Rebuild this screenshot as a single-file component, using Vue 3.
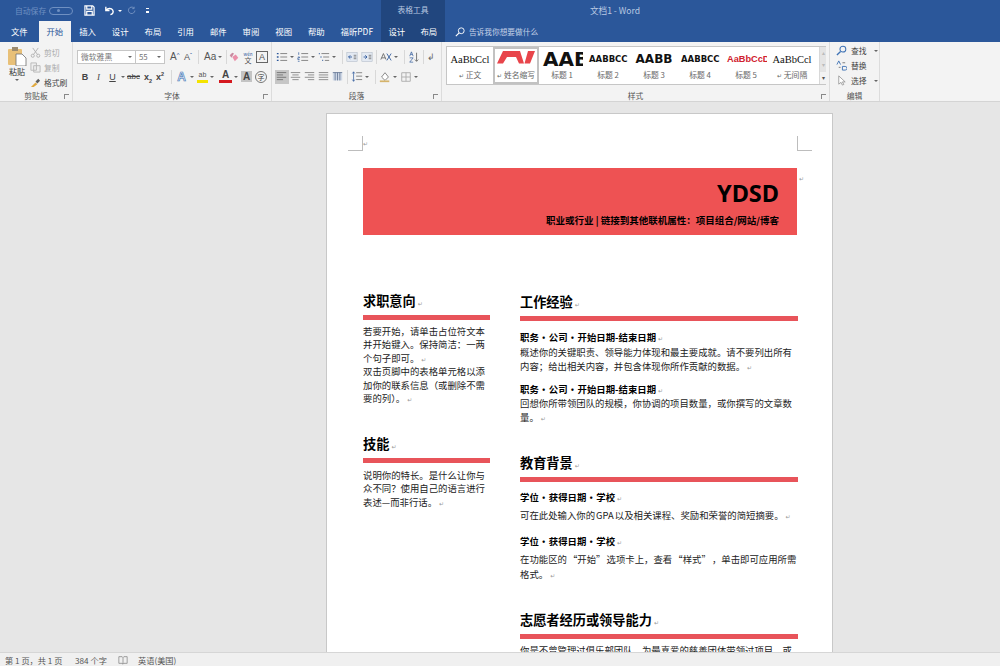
<script setup>
// 顶部选项卡
const tabs = ['插入', '设计', '布局', '引用', '邮件', '审阅', '视图', '帮助']

const styles = [
  { key: 'normal', sample: 'AaBbCcl', name: '正文', mark: true, cls: 'plain' },
  { key: 'initials', sample: '', name: '姓名缩写', mark: true, cls: 'logo' },
  { key: 'h1', sample: 'AAB', name: '标题 1', cls: 'h1' },
  { key: 'h2', sample: 'AABBCC', name: '标题 2', cls: 'h2' },
  { key: 'h3', sample: 'AABB', name: '标题 3', cls: 'h3' },
  { key: 'h4', sample: 'AABBCC', name: '标题 4', cls: 'h2' },
  { key: 'h5', sample: 'AaBbCcD', name: '标题 5', cls: 'h5' },
  { key: 'nospace', sample: 'AaBbCcl', name: '无间隔', mark: true, cls: 'plain' }
]

const jobs = [
  { title: '职务 • 公司 • 开始日期-结束日期', text: '概述你的关键职责、领导能力体现和最主要成就。请不要列出所有内容；给出相关内容，并包含体现你所作贡献的数据。' },
  { title: '职务 • 公司 • 开始日期-结束日期', text: '回想你所带领团队的规模，你协调的项目数量，或你撰写的文章数量。' }
]

const schools = [
  { title: '学位 • 获得日期 • 学校', text: '可在此处输入你的 GPA 以及相关课程、奖励和荣誉的简短摘要。' },
  { title: '学位 • 获得日期 • 学校', text: '在功能区的 “开始” 选项卡上，查看 “样式” ，单击即可应用所需格式。' }
]
</script>

<template>
  <div class="word">
    <header class="title-row">
      <div class="qat">
        <span class="autosave">自动保存</span>
        <span class="toggle"><i></i></span>
        <svg class="qat-icon save" viewBox="0 0 12 12"><path d="M1 1h8.500L11 2.500V11H1z M3 1v3.500h5.500V1 M3 11V7h6v4" fill="none" stroke="#fff" stroke-width="1.300"/></svg>
        <svg class="qat-icon undo" viewBox="0 0 12 12"><path d="M2 2v4h4 M2.500 5.500C4 3.500 8 3 9.500 5.500S9 10 7 10.500" fill="none" stroke="#fff" stroke-width="1.500"/></svg>
        <span class="caret-w"></span>
        <svg class="qat-icon redo" viewBox="0 0 12 12"><path d="M9 2.500A4.300 4.300 0 1 0 10.500 6 M9.500 1v2.500H7" fill="none" stroke="#7f9cc7" stroke-width="1.100"/></svg>
        <span class="qat-more"></span>
      </div>
      <div class="context-title">表格工具</div>
      <div class="doc-title">文档1  -  Word</div>
    </header>

    <nav class="tab-row">
      <span class="tab first">文件</span>
      <span class="tab active">开始</span>
      <span v-for="(t, i) in tabs" :key="i" class="tab">{{ t }}</span>
      <span class="tab pdf">福昕PDF</span>
      <div class="context-tabs">
        <span class="tab">设计</span>
        <span class="tab">布局</span>
      </div>
      <div class="tell-me">
        <svg viewBox="0 0 12 12"><circle cx="7.500" cy="4.500" r="3.500" fill="none" stroke="#fff" stroke-width="1.100"/><path d="M5 7L1 11" stroke="#fff" stroke-width="1.400"/></svg>
        <span>告诉我你想要做什么</span>
      </div>
    </nav>

    <section class="ribbon">
      <div class="group clip">
        <div class="group-body clip-body">
          <div class="paste">
            <svg viewBox="0 0 20 19"><rect x="1" y="2" width="14" height="16" rx="1" fill="#e8c078"/><rect x="5" y="0" width="6" height="4" fill="#9b8a6e"/><path d="M9 7h6l4 4v8H9z" fill="#fff" stroke="#6f6f6f" stroke-width=".8"/></svg>
            <span>粘贴</span>
            <i class="caret"></i>
          </div>
          <div class="clip-col">
            <div class="clip-item off">
              <svg viewBox="0 0 12 12"><path d="M3 1l5 7M9 1L4 8" stroke="#b0b0b0" fill="none"/><circle cx="3" cy="9.500" r="1.700" fill="none" stroke="#b0b0b0"/><circle cx="9" cy="9.500" r="1.700" fill="none" stroke="#b0b0b0"/></svg>
              剪切
            </div>
            <div class="clip-item off">
              <svg viewBox="0 0 12 12"><path d="M1 1h6v8H1z M4 4h7v7H4z" fill="#eee" stroke="#b8b8b8"/></svg>
              复制
            </div>
            <div class="clip-item">
              <svg viewBox="0 0 12 12"><path d="M1 11l5-5 2 2-4 3z" fill="#e0a93f"/><path d="M6 5l3-3 2 2-3 3z" fill="#5e5e5e"/></svg>
              格式刷
            </div>
          </div>
        </div>
        <div class="group-label">剪贴板</div>
        <i class="launcher"></i>
      </div>

      <div class="group font">
        <div class="group-body stack">
          <div class="row">
            <div class="select family">微软雅黑<i class="caret"></i></div>
            <div class="select size">55<i class="caret"></i></div>
            <span class="glyph big">A<sup>^</sup></span>
            <span class="glyph big small-a">A<sup>ˇ</sup></span>
            <b class="divider tight-left"></b>
            <span class="glyph aa">Aa<i class="caret"></i></span>
            <b class="divider tight-right"></b>
            <svg class="icon" viewBox="0 0 14 14"><path d="M2 5l3-3 2 1-3 5z" fill="#c98aa0"/><path d="M5 7l4-3 3 4-4 4z" fill="#ea8fa9"/></svg>
            <span class="wen"><small>wén</small>文</span>
            <span class="boxed">A</span>
          </div>
          <div class="row second">
            <span class="fmt bold">B</span>
            <span class="fmt ital">I</span>
            <span class="fmt under">U</span><i class="caret tight flush"></i>
            <span class="fmt strike">abc</span>
            <span class="fmt script">x<sub>2</sub></span>
            <span class="fmt script">x<sup>2</sup></span>
            <b class="divider wide-left"></b>
            <span class="effect">A</span><i class="caret tight"></i>
            <span class="hilite">ab<i></i></span><i class="caret tight"></i>
            <span class="fcolor">A<i></i></span><i class="caret tight"></i>
            <span class="shade">A</span>
            <span class="circle">字</span>
          </div>
        </div>
        <div class="group-label">字体</div>
        <i class="launcher"></i>
      </div>

      <div class="group para">
        <div class="group-body stack">
          <div class="row">
            <svg class="icon" viewBox="0 0 14 14"><path d="M5 3h8M5 7h8M5 11h8" stroke="#777"/><path d="M1 3h2M1 7h2M1 11h2" stroke="#2b579a" stroke-width="1.500"/></svg><i class="caret tight"></i>
            <svg class="icon" viewBox="0 0 14 14"><path d="M5 3h8M5 7h8M5 11h8" stroke="#777"/><path d="M2 1.500v3M1 7h2v1H1v2h2M1 12h2" stroke="#2b579a" fill="none" stroke-width=".8"/></svg><i class="caret tight"></i>
            <svg class="icon" viewBox="0 0 14 14"><path d="M4 3h9M6 7h7M8 11h5" stroke="#777"/><path d="M1 3h1M3 7h1M5 11h1" stroke="#2b579a" stroke-width="1.500"/></svg><i class="caret tight"></i>
            <b class="divider"></b>
            <svg class="icon" viewBox="0 0 14 14"><rect x="1" y="2" width="12" height="10" fill="#e3e9f2" stroke="#a9b4c4" stroke-width=".6"/><path d="M7 7H3M5 5L3 7l2 2" stroke="#2b579a" fill="none"/><path d="M9 5h3M9 7h3M9 9h3" stroke="#777"/></svg>
            <svg class="icon indent-next" viewBox="0 0 14 14"><rect x="1" y="2" width="12" height="10" fill="#e3e9f2" stroke="#a9b4c4" stroke-width=".6"/><path d="M3 7h4M5 5l2 2-2 2" stroke="#2b579a" fill="none"/><path d="M9 5h3M9 7h3M9 9h3" stroke="#777"/></svg>
            <b class="divider"></b>
            <svg class="icon" viewBox="0 0 14 14"><path d="M1 10l3-7 3 7M2 8h4" fill="none" stroke="#666"/><path d="M8 3l5 8M13 3l-5 8" stroke="#2b579a"/></svg><i class="caret tight"></i>
            <b class="divider"></b>
            <svg class="icon" viewBox="0 0 14 14"><path d="M2 6l2-5 2 5M3 4h2M2 8h4l-4 5h4" fill="none" stroke="#2b579a" stroke-width=".8"/><path d="M10 2v10M8 10l2 2 2-2" fill="none" stroke="#666"/></svg>
            <b class="divider"></b>
            <span class="pilcrow">↲</span>
          </div>
          <div class="row second para-second">
            <span class="align on"><svg viewBox="0 0 14 14"><path d="M1 2h12M1 5h8M1 8h12M1 11h8" stroke="#666"/></svg></span>
            <span class="align"><svg viewBox="0 0 14 14"><path d="M1 2h12M3 5h8M1 8h12M3 11h8" stroke="#777"/></svg></span>
            <span class="align"><svg viewBox="0 0 14 14"><path d="M1 2h12M5 5h8M1 8h12M5 11h8" stroke="#777"/></svg></span>
            <span class="align"><svg viewBox="0 0 14 14"><path d="M1 2h12M1 5h12M1 8h12M1 11h12" stroke="#777"/></svg></span>
            <span class="align"><svg viewBox="0 0 14 14"><rect x="1" y="2" width="12" height="10" fill="#cfd8e6"/><path d="M1 2h12M4 2v10M7 2v10M10 2v10" stroke="#5c6f8f"/></svg></span>
            <b class="divider"></b>
            <svg class="icon" viewBox="0 0 14 14"><path d="M6 2h7M6 6h7M6 10h7" stroke="#777"/><path d="M3 1v11M1.500 3L3 1l1.500 2M1.500 10L3 12l1.500-2" stroke="#2b579a" fill="none" stroke-width=".8"/></svg><i class="caret tight"></i>
            <b class="divider"></b>
            <svg class="icon" viewBox="0 0 14 14"><path d="M3 7l4-5 4 5-4 4z" fill="#fff" stroke="#777"/><path d="M1 12h11" stroke="#d5b36a" stroke-width="2"/></svg><i class="caret tight"></i>
            <svg class="icon" viewBox="0 0 14 14"><path d="M2 2h10v10H2zM7 2v10M2 7h10" fill="none" stroke="#a9a9a9"/></svg><i class="caret tight"></i>
          </div>
        </div>
        <div class="group-label">段落</div>
        <i class="launcher"></i>
      </div>

      <div class="group gallery-group">
        <div class="group-body">
          <div class="gallery">
            <div v-for="s in styles" :key="s.key" class="style-item" :class="{ selected: s.key === 'initials' }">
              <div class="sample" :class="s.cls">
                <svg v-if="s.key === 'initials'" viewBox="0 0 38 12.500"><path d="M6 0h17l4 12.500h-5L19 6h-9l-4 6.500H0zM31 0h7l-5 12.500h-5.500z" fill="#e8454b"/></svg>
                <template v-else>{{ s.sample }}</template>
              </div>
              <div class="style-name"><span v-if="s.mark" class="mark">↵</span>{{ s.name }}</div>
            </div>
            <div class="gallery-scroll">
              <span class="dim">▴</span>
              <span class="dim">▾</span>
              <span>▾</span>
            </div>
          </div>
        </div>
        <div class="group-label">样式</div>
        <i class="launcher"></i>
      </div>

      <div class="group edit">
        <div class="group-body edit-body">
          <div class="edit-item">
            <svg viewBox="0 0 12 12"><circle cx="7.500" cy="4.500" r="3.200" fill="none" stroke="#3f73b5" stroke-width="1.100"/><path d="M5 7L1 11" stroke="#3f73b5" stroke-width="1.500"/></svg>
            查找<i class="caret"></i>
          </div>
          <div class="edit-item">
            <svg viewBox="0 0 12 12"><path d="M1 5l2-4 2 4M7 7v4h3a1 1 0 0 0 0-4z" fill="none" stroke="#3f73b5"/><path d="M7 3h3M3 8h2" stroke="#777"/></svg>
            替换
          </div>
          <div class="edit-item">
            <svg viewBox="0 0 12 12"><path d="M3 1v9l2.500-2 1.500 3 1.500-.7L7 7.500h3z" fill="#fff" stroke="#888" stroke-width=".8"/></svg>
            选择<i class="caret"></i>
          </div>
        </div>
        <div class="group-label">编辑</div>
      </div>
    </section>

    <main class="workspace">
      <article class="page">
        <i class="crop crop-left"></i>
        <i class="crop crop-right"></i>
        <span class="ret top-ret">↵</span>
        <div class="banner">
          <h1>YDSD</h1>
          <p>职业或行业 | 链接到其他联机属性：项目组合/网站/博客</p>
          <span class="ret banner-ret">↵</span>
        </div>

        <div class="columns">
          <div class="col-left">
            <h2>求职意向<span class="ret">↵</span></h2>
            <div class="rule"></div>
            <p class="body">若要开始，请单击占位符文本并开始键入。保持简洁：一两个句子即可。<span class="ret">↵</span><br>双击页脚中的表格单元格以添加你的联系信息（或删除不需要的列）。<span class="ret">↵</span></p>

            <h2 class="next">技能<span class="ret">↵</span></h2>
            <div class="rule"></div>
            <p class="body">说明你的特长。是什么让你与众不同？使用自己的语言进行表述—而非行话。<span class="ret">↵</span></p>
          </div>

          <div class="col-right">
            <h2>工作经验<span class="ret">↵</span></h2>
            <div class="rule"></div>
            <div v-for="(j, i) in jobs" :key="i" class="job">
              <h3>{{ j.title }}<span class="ret">↵</span></h3>
              <p class="body wide">{{ j.text }}<span class="ret">↵</span></p>
            </div>

            <h2 class="next">教育背景<span class="ret">↵</span></h2>
            <div class="rule"></div>
            <div v-for="(s, i) in schools" :key="i" class="school">
              <h3>{{ s.title }}<span class="ret">↵</span></h3>
              <p class="body loose">{{ s.text }}<span class="ret">↵</span></p>
            </div>

            <h2 class="next after-school">志愿者经历或领导能力<span class="ret">↵</span></h2>
            <div class="rule"></div>
            <p class="body loose last">你是不曾管理过俱乐部团队、为最喜爱的慈善团体带领过项目，或组织过活动？</p>
          </div>
        </div>
      </article>
    </main>

    <footer class="status">
      <span class="s1">第 1 页，共 1 页</span>
      <span class="s2">384 个字</span>
      <svg viewBox="0 0 12 12"><path d="M1 2h4l1 1 1-1h4v8H7l-1 1-1-1H1z M6 3v8" fill="none" stroke="#777" stroke-width=".8"/></svg>
      <span class="s3">英语(美国)</span>
    </footer>
  </div>
</template>

<style>
html, body {
  margin: 0;
  padding: 0;
  overflow: hidden;
}
</style>

<style scoped>
.word {
  width: 1000px;
  height: 666px;
  display: flex;
  flex-direction: column;
  overflow: hidden;
  font-family: "Noto Sans CJK SC", "Noto Sans", sans-serif;
  background: #e6e6e6;
  color: #444;
}

i, b.divider {
  display: block;
}

/* 标题栏 */
.title-row {
  height: 21px;
  flex-shrink: 0;
  display: flex;
  background: #2b579a;
  color: #dfe7f3;
  font-size: 7.800px;
  line-height: 20px;
}

.qat {
  width: 381px;
  display: flex;
  align-items: center;
  flex-shrink: 0;
}

.autosave {
  margin-left: 15px;
  width: 34px;
  font-size: 7.800px;
  color: #6f90c2;
}

.toggle {
  width: 24px;
  height: 8px;
  border: 1px solid #6f90c2;
  border-radius: 5px;
  display: flex;
  align-items: center;
  padding-left: 7px;
  box-sizing: border-box;
}

.toggle i {
  width: 3px;
  height: 3px;
  background: #6f90c2;
  border-radius: 50%;
}

.qat-icon {
  width: 11px;
  height: 11px;
  flex-shrink: 0;
}

.save { margin-left: 11px; }
.undo { margin-left: 9px; }

.redo {
  margin-left: 5px;
  width: 9px;
  height: 9px;
}

.caret-w {
  margin-left: 3px;
  border: 2px solid transparent;
  border-top: 2.500px solid #fff;
  margin-top: 3px;
}

.qat-more {
  margin-left: 10px;
  width: 3px;
  height: 5px;
  border-top: 1px solid #fff;
  border-bottom: 2px solid #fff;
  box-sizing: border-box;
}

.context-title {
  width: 64px;
  flex-shrink: 0;
  background: #21467e;
  text-align: center;
  color: #b8c8e0;
}

.doc-title {
  flex: 1;
  text-align: center;
  padding-right: 215px;
  white-space: pre;
  font-size: 8.600px;
  color: #b9c9e2;
}

/* 选项卡 */
.tab-row {
  height: 21px;
  flex-shrink: 0;
  display: flex;
  background: #2b579a;
  color: #fff;
  font-size: 8.400px;
  line-height: 21px;
}

.tab {
  width: 32.700px;
  text-align: center;
  flex-shrink: 0;
}

.tab.first { width: 38.500px; }
.tab.pdf { width: 48.200px; }

.tab.active {
  background: #f3f3f3;
  color: #2b579a;
}

.context-tabs {
  width: 64px;
  flex-shrink: 0;
  display: flex;
  background: #21467e;
}

.context-tabs .tab { width: 32px; }

.tell-me {
  display: flex;
  align-items: center;
  margin-left: 10px;
  gap: 4px;
  color: #c6d3e8;
  font-size: 7.700px;
}

.tell-me svg {
  width: 10px;
  height: 10px;
}

/* 功能区 */
.ribbon {
  height: 60px;
  flex-shrink: 0;
  box-sizing: border-box;
  display: flex;
  background: #f3f3f3;
  border-bottom: 1px solid #d4d4d4;
  font-size: 7.800px;
}

.group {
  position: relative;
  display: flex;
  flex-direction: column;
  flex-shrink: 0;
  box-sizing: border-box;
  border-right: 1px solid #dcdcdc;
  height: 59px;
}

.group-body {
  height: 47px;
  flex-shrink: 0;
}

.group-label {
  text-align: center;
  font-size: 7.800px;
  line-height: 13px;
  color: #555;
}

.launcher {
  position: absolute;
  right: 3px;
  bottom: 2px;
  width: 4px;
  height: 4px;
  border-left: 1px solid #888;
  border-top: 1px solid #888;
}

.caret {
  display: inline-block;
  border: 2px solid transparent;
  border-top: 2.500px solid #666;
  border-bottom: 0;
}

.caret.tight {
  margin: 0 3px 0 2px;
  flex-shrink: 0;
}

.caret.tight.flush {
  margin-right: 0;
}

.clip { width: 73px; }

.clip-body {
  display: flex;
  padding-top: 5px;
  box-sizing: border-box;
}

.paste {
  width: 29px;
  padding-left: 5px;
  box-sizing: border-box;
  display: flex;
  flex-direction: column;
  align-items: center;
  font-size: 8px;
  line-height: 11px;
  color: #333;
}

.paste svg {
  width: 20px;
  height: 19px;
  flex-shrink: 0;
}

.paste .caret {
  margin-top: 2px;
}

.clip-col {
  display: flex;
  flex-direction: column;
  gap: 3px;
  margin: -1px 0 0 1px;
}

.clip-item {
  display: flex;
  align-items: center;
  gap: 3px;
  height: 12px;
  white-space: nowrap;
}

.clip-item.off { color: #aaa; }

.clip-item svg {
  width: 11px;
  height: 11px;
}

.font { width: 199px; }
.para { width: 170px; }

.stack {
  display: flex;
  flex-direction: column;
  gap: 5px;
  padding: 7px 0 0 4px;
  box-sizing: border-box;
}

.row {
  display: flex;
  align-items: center;
  height: 15px;
  white-space: nowrap;
}

.select {
  height: 14px;
  box-sizing: border-box;
  background: #fff;
  border: 1px solid #c6c6c6;
  display: flex;
  align-items: center;
  justify-content: space-between;
  padding: 0 3px;
  font-size: 7.800px;
  color: #777;
}

.family { width: 59px; }

.size {
  width: 30px;
  margin-left: -1px;
  margin-right: 5px;
}

.glyph {
  font-family: "Liberation Sans", sans-serif;
  color: #555;
  font-size: 10px;
  line-height: 14px;
}

.glyph.big { width: 14px; }
.glyph.big sup { font-size: 6px; color: #2b579a; vertical-align: 3px; line-height: 0; }
.glyph.small-a { font-size: 9px; width: 13px; }

.glyph.aa {
  width: 21px;
  display: flex;
  align-items: center;
  gap: 2px;
  padding-left: 2px;
  box-sizing: border-box;
}

.divider {
  width: 1px;
  height: 14px;
  background: #d8d8d8;
  margin: 0 3px;
  flex-shrink: 0;
}

.divider.tight-left { margin-left: 1px; }
.divider.tight-right { margin-right: 1px; }
.divider.wide-left { margin-left: 5px; }

.icon {
  width: 12px;
  height: 12px;
  flex-shrink: 0;
}

.indent-next { margin-left: 3px; }

.wen {
  width: 10px;
  margin: 0 3px;
  display: flex;
  flex-direction: column;
  align-items: center;
  font-size: 7px;
  line-height: 6px;
  color: #555;
}

.wen small {
  font-size: 4.500px;
  color: #2b579a;
}

.boxed {
  width: 10px;
  height: 10px;
  border: 1px solid #666;
  font-family: "Liberation Sans", sans-serif;
  font-size: 9px;
  line-height: 10px;
  text-align: center;
  color: #555;
}

.fmt {
  text-align: center;
  font-family: "Liberation Sans", sans-serif;
  font-size: 9px;
  color: #444;
}

.fmt.bold { font-weight: 700; width: 16px; }
.fmt.ital { font-family: "Liberation Serif", serif; font-style: italic; width: 11px; }
.fmt.under { text-decoration: underline; width: 13px; margin-left: 2px; }
.fmt.strike { font-size: 8px; text-decoration: line-through; width: 17px; }
.fmt.script { width: 12px; font-weight: 700; }
.fmt.script sub, .fmt.script sup { font-size: 5.500px; line-height: 0; }

.effect {
  width: 13px;
  text-align: center;
  font-family: "Liberation Sans", sans-serif;
  font-size: 12px;
  font-weight: 700;
  color: #dbe7f6;
  -webkit-text-stroke: .6px #3f73b5;
}

.hilite, .fcolor {
  display: block;
  text-align: center;
  font-family: "Liberation Sans", sans-serif;
  line-height: 10px;
}

.hilite {
  width: 11px;
  font-size: 7px;
  color: #555;
}

.hilite i, .fcolor i {
  height: 3px;
  background: #f4e300;
}

.fcolor {
  width: 13px;
  margin-left: 2px;
  font-size: 10px;
  color: #444;
  font-weight: 700;
}

.fcolor i { background: #d5181f; }

.shade {
  width: 11px;
  height: 11px;
  background: #c4c4c4;
  font-family: "Liberation Sans", sans-serif;
  font-size: 10px;
  font-weight: 700;
  line-height: 11px;
  text-align: center;
  color: #444;
}

.circle {
  width: 10px;
  height: 10px;
  margin-left: 3px;
  border: 1px solid #777;
  border-radius: 50%;
  font-size: 7px;
  line-height: 10px;
  text-align: center;
}

.pilcrow {
  font-size: 9px;
  color: #666;
}

.para-second { margin-left: -1px; }

.align {
  width: 13.800px;
  height: 14px;
  display: flex;
  align-items: center;
  justify-content: center;
  flex-shrink: 0;
}

.align svg {
  width: 11px;
  height: 11px;
}

.align.on { background: #c6c6c6; }

.gallery-group { width: 388px; }

.gallery {
  position: relative;
  margin: 4px 0 0 4px;
  width: 380px;
  height: 39px;
  box-sizing: border-box;
  display: flex;
  background: #fff;
  border: 1px solid #c6c6c6;
  border-right: 0;
}

.style-item {
  width: 46px;
  height: 37px;
  box-sizing: border-box;
  flex-shrink: 0;
  overflow: hidden;
  display: flex;
  flex-direction: column;
  align-items: center;
  padding-top: 3px;
}

.style-item.selected {
  border: 2px solid #c2c2c2;
  padding-top: 1px;
}

.sample {
  height: 19px;
  width: 42px;
  flex-shrink: 0;
  overflow: hidden;
  text-align: center;
  white-space: nowrap;
  font-family: "DejaVu Sans", sans-serif;
  font-weight: 700;
  color: #111;
  line-height: 19px;
}

.sample.plain {
  font-family: "Liberation Serif", serif;
  font-weight: 400;
  font-size: 10.500px;
}

.sample.logo svg {
  display: block;
  width: 38px;
  height: 12.500px;
  margin: 1px auto 0;
}

.sample.h1 { font-size: 20px; text-align: left; padding-left: 2px; box-sizing: border-box; }
.sample.h2 { font-size: 8.500px; text-align: left; padding-left: 2px; box-sizing: border-box; }
.sample.h3 { font-size: 12px; }

.sample.h5 {
  font-family: "Liberation Sans", sans-serif;
  font-size: 9.200px;
  text-align: left;
  padding-left: 2px;
  box-sizing: border-box;
  color: #d0202e;
}

.style-name {
  font-size: 7.800px;
  line-height: 12px;
  color: #666;
  white-space: nowrap;
}

.mark {
  font-size: 6px;
  margin-right: 2px;
}

.gallery-scroll {
  width: 9px;
  display: flex;
  flex-direction: column;
  margin-left: 4px;
  font-size: 6px;
  line-height: 12.300px;
  text-align: center;
  color: #555;
  background: #f3f3f3;
  border-left: 1px solid #d8d8d8;
}

.gallery-scroll .dim {
  color: #bbb;
  background: #e4e4e4;
}

.edit { width: 50px; }

.edit-body {
  padding: 2px 0 0 6px;
  box-sizing: border-box;
  display: flex;
  flex-direction: column;
  gap: 2px;
}

.edit-item {
  display: flex;
  align-items: center;
  gap: 4px;
  height: 13px;
  white-space: nowrap;
}

.edit-item svg {
  width: 11px;
  height: 11px;
}

.edit-item .caret {
  margin-left: 3px;
}

/* 文档区 */
.workspace {
  flex: 1;
  min-height: 0;
  overflow: hidden;
  padding: 11px 0 0 326px;
}

.page {
  position: relative;
  width: 507px;
  height: 700px;
  box-sizing: border-box;
  padding: 54px 36px 0 36px;
  background: #fff;
  border: 1px solid #c8c8c8;
  color: #222;
}

.ret {
  font-family: "DejaVu Sans", sans-serif;
  font-weight: 400;
  font-size: 6px;
  line-height: 0;
  color: #999;
  margin-left: 2px;
}

.top-ret {
  position: absolute;
  left: 34px;
  top: 30px;
}

.crop {
  position: absolute;
  top: 22px;
  width: 14px;
  height: 14px;
  border-bottom: 1px solid #bdbdbd;
}

.crop-left {
  left: 21px;
  border-right: 1px solid #bdbdbd;
}

.crop-right {
  left: 470px;
  border-left: 1px solid #bdbdbd;
}

.banner {
  position: relative;
  height: 67px;
  width: 434px;
  box-sizing: border-box;
  background: #ee5253;
  padding: 12px 18px 0 0;
  text-align: right;
  color: #000;
}

.banner h1 {
  margin: 0;
  font-family: "Noto Sans", sans-serif;
  font-size: 23.500px;
  font-weight: 700;
  line-height: 27px;
}

.banner p {
  margin: 6px 0 0;
  font-size: 9.500px;
  font-weight: 700;
  line-height: 14px;
  white-space: nowrap;
}

.banner-ret {
  position: absolute;
  left: 434px;
  top: 11px;
}

.columns {
  display: flex;
  gap: 30px;
  margin-top: 57px;
}

.col-left {
  width: 127px;
  flex-shrink: 0;
}

.col-right {
  width: 278px;
  flex-shrink: 0;
  padding-top: 1px;
}

h2 {
  margin: 0;
  font-size: 13.200px;
  font-weight: 700;
  line-height: 18px;
  color: #000;
  white-space: nowrap;
}

h2.next {
  margin-top: 29.500px;
}

h2.next.after-school {
  margin-top: 28.500px;
}

.rule {
  height: 5px;
  margin-top: 5px;
  background: #e8545a;
}

h3 {
  margin: 0;
  font-size: 9.400px;
  font-weight: 700;
  line-height: 13.500px;
  color: #000;
  white-space: nowrap;
  word-spacing: -1.800px;
}

.body {
  margin: 5px 0 0;
  font-size: 9.400px;
  line-height: 13.400px;
}

.col-left .next + .rule + .body {
  margin-top: 6px;
}

.body.wide {
  margin: 0;
  line-height: 14px;
}

.job {
  margin-top: 10px;
}

.school {
  margin-top: 11.500px;
}

.rule + .school {
  margin-top: 9px;
}

.body.loose {
  margin: 4px 0 0;
  line-height: 15px;
  word-spacing: -1px;
}

.body.last {
  margin-top: 4.500px;
}

/* 状态栏 */
.status {
  height: 14px;
  flex-shrink: 0;
  box-sizing: border-box;
  display: flex;
  align-items: center;
  background: #f0f0f0;
  border-top: 1px solid #d6d6d6;
  font-size: 8.200px;
  color: #555;
  white-space: nowrap;
}

.s1 {
  margin-left: 5px;
  width: 70px;
}

.s2 {
  width: 43px;
}

.status svg {
  width: 10px;
  height: 10px;
}

.s3 {
  margin-left: 10px;
}
</style>
